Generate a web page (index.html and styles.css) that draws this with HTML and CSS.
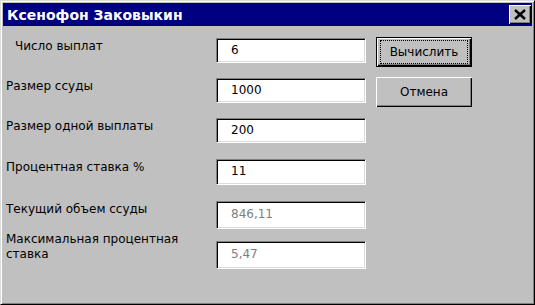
FILE: index.html
```html
<!DOCTYPE html>
<html lang="ru">
  <head>
    <meta charset="utf-8" />
    <title>Ксенофон Заковыкин</title>
    <link rel="stylesheet" href="styles.css">
  </head>
  <body>
    <section class="window">
      <header class="titlebar">
        <span class="title">Ксенофон Заковыкин</span>
        <button class="close">
          <svg width="12" height="11" viewBox="0 0 12 11">
            <path d="M1 1 L11 10 M11 1 L1 10" stroke="#000" stroke-width="2.4" />
          </svg>
        </button>
      </header>

      <div class="content">
        <div class="form">
          <label class="label indent">Число выплат</label>
          <div class="field">6</div>
          <button class="btn default"><span class="focus">Вычислить</span></button>

          <label class="label">Размер ссуды</label>
          <div class="field">1000</div>
          <button class="btn">Отмена</button>

          <label class="label">Размер одной выплаты</label>
          <div class="field">200</div>
          <div></div>

          <label class="label">Процентная ставка %</label>
          <div class="field tall">11</div>
          <div></div>

          <label class="label">Текущий объем ссуды</label>
          <div class="field big disabled">846,11</div>
          <div></div>

          <label class="label two">Максимальная процентная<br>ставка</label>
          <div class="field big disabled">5,47</div>
          <div></div>
        </div>
      </div>
    </section>
  </body>
</html>
```

FILE: styles.css
```css
body {
  margin: 0;
  font-family: "DejaVu Sans", sans-serif;
}

.window {
  width: 535px;
  height: 305px;
  box-sizing: border-box;
  background-color: #c0c0c0;
  border-top: 1px solid #dcdcdc;
  border-left: 1px solid #dcdcdc;
  border-right: 1px solid #000;
  border-bottom: 1px solid #000;
  box-shadow: inset 1px 1px 0 #fff, inset -1px -1px 0 #808080;
  padding: 2px 2px 2px 2px;
}

.titlebar {
  height: 23px;
  background-color: #000080;
  display: flex;
  align-items: center;
  justify-content: space-between;
  padding: 0 1px 0 4px;
}

.title {
  color: white;
  font-weight: bold;
  font-size: 14px;
  font-family: "DejaVu Sans", sans-serif;
}

.close {
  width: 22px;
  height: 19px;
  padding: 0;
  margin: 0;
  background-color: #c0c0c0;
  border: none;
  box-shadow: inset 1px 1px 0 #fff, inset -1px -1px 0 #000, inset -2px -2px 0 #808080;
  display: flex;
  align-items: center;
  justify-content: center;
}

.content {
  padding: 12px 0 0 3px;
}

.form {
  display: grid;
  grid-template-columns: 200px 150px 96px;
  grid-template-rows: 40px 40px 41px 42px 40px 28px;
  column-gap: 10px;
  align-items: start;
}

.label {
  font-size: 12px;
  color: #000;
  line-height: 15px;
  padding-top: 1px;
}

.label.indent {
  padding-left: 9px;
}

.label.two {
  margin-top: -10px;
}

.field {
  height: 25px;
  background-color: white;
  box-sizing: border-box;
  border-top: 1px solid #808080;
  border-left: 1px solid #808080;
  border-right: 1px solid #fff;
  border-bottom: 1px solid #fff;
  box-shadow: inset 1px 1px 0 #000, inset -1px -1px 0 #dcdcdc;
  font-size: 12px;
  line-height: 22px;
  padding-left: 14px;
  color: #000;
}

.field.tall {
  height: 26px;
}

.field.big {
  height: 28px;
  line-height: 24px;
}

.field.disabled {
  color: #808080;
}

.btn {
  height: 30px;
  margin-top: -1px;
  background-color: #c0c0c0;
  border: none;
  box-shadow: inset 1px 1px 0 #fff, inset -1px -1px 0 #000, inset -2px -2px 0 #808080;
  font-family: "DejaVu Sans", sans-serif;
  font-size: 12px;
  color: #000;
  padding: 0;
}

.btn.default {
  border: 1px solid #000;
  box-shadow: inset 1px 1px 0 #fff, inset -1px -1px 0 #000, inset -2px -2px 0 #808080;
}

.focus {
  display: block;
  margin: 0 3px;
  padding: 4px 0;
  border: 1px dotted #000;
}
```
